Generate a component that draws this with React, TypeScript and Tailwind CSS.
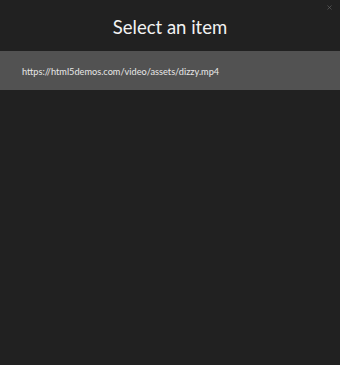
import { X } from 'lucide-react';

const items = ['https://html5demos.com/video/assets/dizzy.mp4'];

function App() {
  return (
    <div className="relative h-[365px] w-[340px] overflow-hidden bg-[#212121] font-['Lato',sans-serif]">
      <button className="absolute right-[7px] top-[4px] text-[#6a6a6a]">
        <X className="h-[7px] w-[7px]" strokeWidth={2} />
      </button>
      <h1 className="pt-[13px] pb-[10px] text-center text-[18.5px] leading-[28px] text-[#f2f2f2]">Select an item</h1>
      <ul>
        {items.map(item => (
          <li key={item} className="flex h-[39px] items-center bg-[#525252] pl-[22px] pt-[2px] text-[9.2px] text-[#e8e8e8]">
            {item}
          </li>
        ))}
      </ul>
    </div>
  );
}

export default App;
